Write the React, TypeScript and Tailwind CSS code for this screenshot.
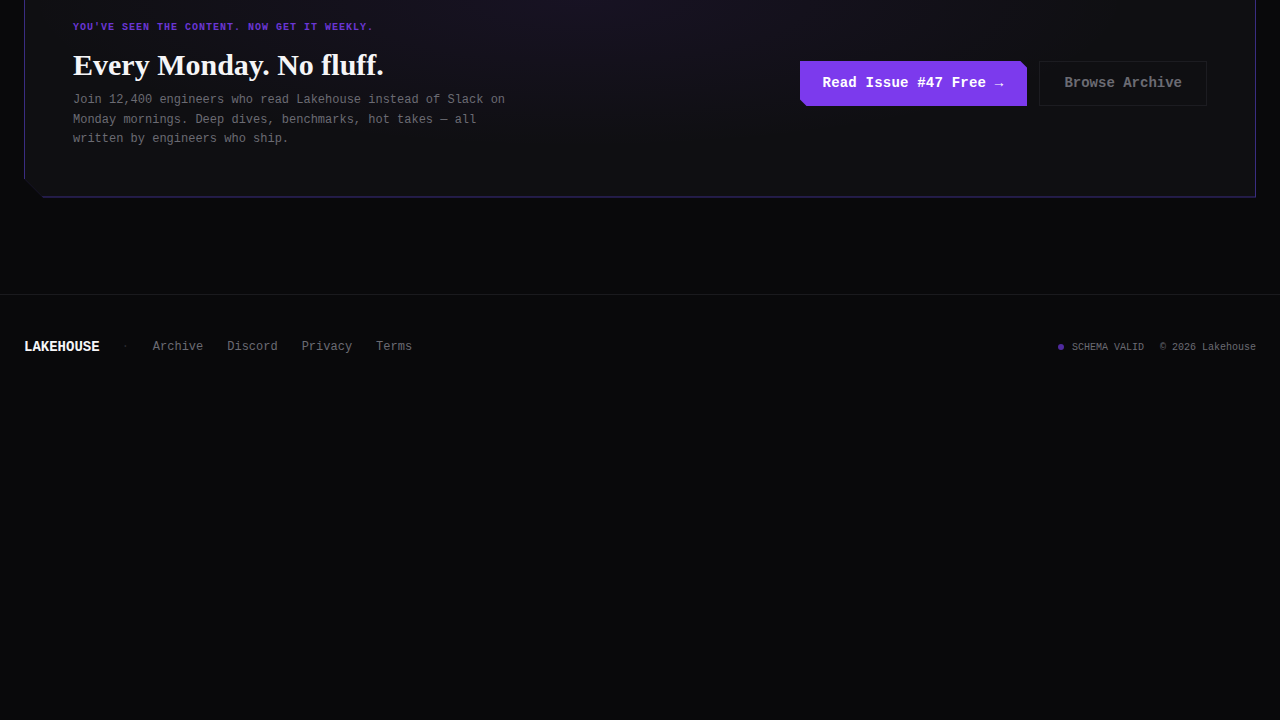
import React from "react";

export default function App() {
  const mono = { fontFamily: '"Liberation Mono", "DejaVu Sans Mono", monospace' } as const;
  return (
    <div className="min-h-[720px] w-full bg-[#09090b]" style={mono}>
      <section className="px-6 pb-24">
        <div className="bg-[#3a2d82] px-px pb-px [clip-path:polygon(0_0,100%_0,100%_100%,19px_100%,0_calc(100%-19px))]">
          <div className="bg-[#0f0f12] bg-[radial-gradient(ellipse_60%_100%_at_45%_0%,rgba(124,58,237,0.08),transparent_75%)] px-12 pt-[21px] pb-[47px] flex items-start justify-between [clip-path:polygon(0_0,100%_0,100%_100%,15px_100%,0_calc(100%-15px))]">
            <div className="flex flex-col">
              <div className="text-[10px] leading-[14px] font-bold tracking-[0.1em] text-[#6a36d4] uppercase">
                You've seen the content. Now get it weekly.
              </div>
              <h2
                className="mt-[12px] text-[30px] leading-[36px] font-bold text-[#f5f5f7]"
                style={{ fontFamily: '"Liberation Serif", "Times New Roman", serif' }}
              >
                Every Monday. No fluff.
              </h2>
              <p className="mt-[8px] max-w-[448px] text-[12px] leading-[19.5px] text-[#6b6b73]">
                Join 12,400 engineers who read Lakehouse instead of Slack on Monday mornings. Deep dives, benchmarks, hot takes — all written by engineers who ship.
              </p>
            </div>
            <div className="mt-10 flex items-center gap-3">
              <button className="h-[45px] pl-[23px] pr-6 bg-[#7c3aed] text-white text-[14px] font-bold tracking-[0.015em] [clip-path:polygon(0_0,calc(100%-7px)_0,100%_7px,100%_100%,7px_100%,0_calc(100%-7px))]">
                Read Issue #47 Free →
              </button>
              <button className="h-[45px] px-6 border border-[#1c1c21] text-[#6b6b73] text-[14px] font-bold">
                Browse Archive
              </button>
            </div>
          </div>
        </div>
      </section>
      <footer className="border-t border-[#1a1a1e] px-6 pt-[42px] pb-10 flex items-center justify-between">
        <div className="flex items-center gap-6">
          <span className="text-[14px] font-bold text-[#f5f5f7]">LAKEHOUSE</span>
          <span className="text-[12px] text-[#2a2a30] -ml-[2px]">·</span>
          <nav className="flex items-center gap-6 text-[12px] text-[#6b6b73]">
            <span>Archive</span>
            <span>Discord</span>
            <span>Privacy</span>
            <span>Terms</span>
          </nav>
        </div>
        <div className="flex items-center gap-4 text-[10px] text-[#6b6b73]">
          <span className="flex items-center gap-2">
            <span className="w-[6px] h-[6px] rounded-full bg-[#4f2a9e]" />
            <span className="text-[#6b6b73]">SCHEMA VALID</span>
          </span>
          <span>© 2026 Lakehouse</span>
        </div>
      </footer>
    </div>
  );
}
